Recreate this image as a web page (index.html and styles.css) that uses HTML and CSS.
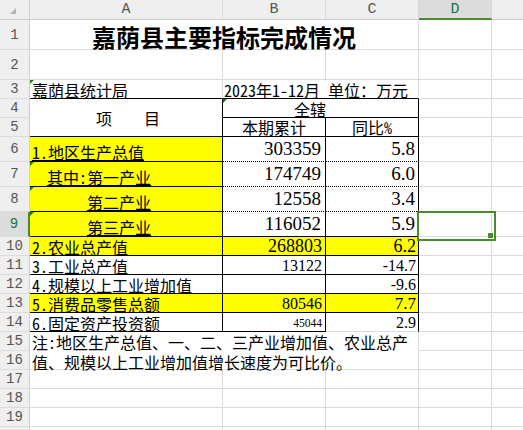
FILE: index.html
```html
<!DOCTYPE html>
<html lang="zh-CN">
<head>
<meta charset="utf-8">
<title>嘉荫县主要指标完成情况</title>
<link rel="stylesheet" href="styles.css">
</head>
<body>
<div class="sheet">
  <div class="corner"><svg width="6" height="6" viewBox="0 0 6 6"><polygon points="6,0 6,6 0,6" fill="#b4b4b4"/></svg></div>
  <div class="colh">A</div>
  <div class="colh">B</div>
  <div class="colh">C</div>
  <div class="colh colsel">D</div>
  <div class="colh e"></div>

  <div class="rowh">1</div>
  <div class="c s3 title">嘉荫县主要指标完成情况</div>
  <div class="c"></div>
  <div class="c e"></div>

  <div class="rowh">2</div>
  <div class="c"></div><div class="c"></div><div class="c"></div><div class="c"></div><div class="c e"></div>

  <div class="rowh">3</div>
  <div class="c bb tri txt">嘉荫县统计局</div>
  <div class="c s2 bb txt unit">2023年1-12月 单位：万元</div>
  <div class="c"></div>
  <div class="c e"></div>

  <div class="rowh">4</div>
  <div class="c r2 bb br mid">项&nbsp;&nbsp;&nbsp;&nbsp;目</div>
  <div class="c s2 bb br tri zone">全辖</div>
  <div class="c"></div>
  <div class="c e"></div>

  <div class="rowh">5</div>
  <div class="c bb br hd">本期累计</div>
  <div class="c bb br hd">同比%</div>
  <div class="c"></div>
  <div class="c e"></div>

  <div class="rowh">6</div>
  <div class="c y bb br big"><span class="u">1.地区生产总值</span></div>
  <div class="c db br nb">303359</div>
  <div class="c db br nc">5.8</div>
  <div class="c"></div>
  <div class="c e"></div>

  <div class="rowh">7</div>
  <div class="c y bb br big tri ind1"><span class="u">其中:第一产业</span></div>
  <div class="c db br nb">174749</div>
  <div class="c db br nc">6.0</div>
  <div class="c"></div>
  <div class="c e"></div>

  <div class="rowh">8</div>
  <div class="c y bb br big tri ind2"><span class="u">第二产业</span></div>
  <div class="c db br nb">12558</div>
  <div class="c db br nc">3.4</div>
  <div class="c"></div>
  <div class="c e"></div>

  <div class="rowh rowsel">9</div>
  <div class="c y bb br big tri ind2"><span class="u">第三产业</span></div>
  <div class="c bb br nb">116052</div>
  <div class="c bb br nc">5.9</div>
  <div class="c selcell"></div>
  <div class="c e"></div>

  <div class="rowh">10</div>
  <div class="c y bb br txt"><span class="u">2.农业总产值</span></div>
  <div class="c y bb br n18 pb">268803</div>
  <div class="c y bb br n18 pc">6.2</div>
  <div class="c"></div>
  <div class="c e"></div>

  <div class="rowh">11</div>
  <div class="c bb br txt">3.工业总产值</div>
  <div class="c bb br n16 pb">13122</div>
  <div class="c bb br n16 pc">-14.7</div>
  <div class="c"></div>
  <div class="c e"></div>

  <div class="rowh">12</div>
  <div class="c bb br txt">4.规模以上工业增加值</div>
  <div class="c bb br"></div>
  <div class="c bb br n16 pc">-9.6</div>
  <div class="c"></div>
  <div class="c e"></div>

  <div class="rowh">13</div>
  <div class="c y bb br txt"><span class="u">5.消费品零售总额</span></div>
  <div class="c y bb br n16 pb">80546</div>
  <div class="c y bb br n17 pc">7.7</div>
  <div class="c"></div>
  <div class="c e"></div>

  <div class="rowh">14</div>
  <div class="c bb br txt">6.固定资产投资额</div>
  <div class="c bb br n11 pb">45044</div>
  <div class="c br n16 pc">2.9</div>
  <div class="c"></div>
  <div class="c e"></div>

  <div class="rowh">15</div>
  <div class="c s3 r2 note">注:地区生产总值、一、二、三产业增加值、农业总产值、规模以上工业增加值增长速度为可比价。</div>
  <div class="c"></div>
  <div class="c e"></div>

  <div class="rowh">16</div>
  <div class="c"></div>
  <div class="c e"></div>

  <div class="rowh">17</div>
  <div class="c"></div><div class="c"></div><div class="c"></div><div class="c"></div><div class="c e"></div>
  <div class="rowh">18</div>
  <div class="c"></div><div class="c"></div><div class="c"></div><div class="c"></div><div class="c e"></div>
  <div class="rowh">19</div>
  <div class="c"></div><div class="c"></div><div class="c"></div><div class="c"></div><div class="c e"></div>
  <div class="rowh"></div>
  <div class="c"></div><div class="c"></div><div class="c"></div><div class="c"></div><div class="c e"></div>
</div>
</body>
</html>
```

FILE: styles.css
```css
* { box-sizing: border-box; }
html, body { margin: 0; padding: 0; background: #ffffff; }
body {
  width: 523px;
  height: 430px;
  overflow: hidden;
  font-family: "Noto Sans Mono CJK SC", "Noto Sans CJK SC", sans-serif;
  font-size: 16px;
  color: #000;
}
.sheet {
  width: 523px;
  height: 430px;
  overflow: hidden;
  display: grid;
  grid-template-columns: 30px 193px 103px 93px 73px 31px;
  grid-template-rows: 20px 30px 30px 19px 19px 19px 25px 25px 25px 25px repeat(10, 19px) 4px;
}

/* headers */
.corner, .colh, .rowh {
  background: #efefef;
  display: flex;
  align-items: center;
  justify-content: center;
  color: #555;
  font-family: "Liberation Mono", monospace;
}
.corner {
  border-right: 1px solid #cfcfcf;
  border-bottom: 1px solid #cfcfcf;
  padding: 2px 4px 0 0;
}
.corner svg { display: block; }
.colh {
  border-right: 1px solid #d8d8d8;
  border-bottom: 1px solid #cfcfcf;
  font-size: 15px;
}
.colsel {
  background: #dcdcdc;
  color: #217346;
  border-bottom: 2px solid #4a8b2c;
}
.rowh {
  border-right: 1px solid #cfcfcf;
  border-bottom: 1px solid #dcdcdc;
  font-size: 14px;
}
.rowsel {
  background: #dcdcdc;
  color: #217346;
  border-right: 2px solid #4a8b2c;
}

/* cells */
.c {
  border-right: 1px solid #dcdcdc;
  border-bottom: 1px solid #dcdcdc;
  display: flex;
  align-items: flex-end;
  min-width: 0;
  line-height: 16px;
  white-space: nowrap;
}
.e { border-right: none; }
.s2 { grid-column: span 2; }
.s3 { grid-column: span 3; }
.r2 { grid-row: span 2; }
.bb { border-bottom-color: #000; }
.br { border-right-color: #000; }
.db { border-bottom: 1px dotted #000; }
.y { background: #ffff00; }
.u { text-decoration: underline; text-underline-offset: 1px; }

.title {
  justify-content: center;
  font-size: 24px;
  line-height: 24px;
  font-weight: 700;
  padding-bottom: 0;
}
.txt { padding-left: 2px; padding-bottom: 0; }
.unit { padding-left: 1px; }
.mid { align-items: center; justify-content: center; padding-left: 4px; }
.zone { padding-left: 71px; padding-bottom: 0; }
.hd { justify-content: center; padding-bottom: 1px; }
.big { padding-left: 2px; padding-bottom: 1px; }
.ind1 { padding-left: 17px; }
.ind2 { padding-left: 57px; }

.tri { position: relative; }
.tri::before {
  content: "";
  position: absolute;
  top: 0;
  left: 0;
  border-style: solid;
  border-width: 4px 4px 0 0;
  border-color: #1f7d1f transparent transparent transparent;
}

/* numbers */
.nb, .nc, .n18, .n17, .n16, .n11 {
  font-family: "Liberation Serif", serif;
  justify-content: flex-end;
}
.nb, .nc { font-size: 19px; line-height: 19px; padding-bottom: 3px; }
.nb { padding-right: 4px; }
.nc { padding-right: 3px; }
.n18 { font-size: 18px; line-height: 16px; padding-bottom: 1px; }
.n17 { font-size: 17px; line-height: 15px; padding-bottom: 1px; }
.n16 { font-size: 16px; line-height: 15px; padding-bottom: 1px; }
.n11 { font-size: 11.5px; line-height: 12px; padding-bottom: 2px; }
.pb { padding-right: 3px; }
.pc { padding-right: 2px; }

.note {
  white-space: normal;
  align-items: flex-start;
  line-height: 20px;
  padding-left: 2px;
  padding-right: 0;
}

/* selected cell D9 */
.selcell { position: relative; }
.selcell::after {
  content: "";
  position: absolute;
  left: -2px;
  top: -1px;
  width: 75px;
  height: 26px;
  border: 2px solid #4a8b2c;
  z-index: 5;
}
.selcell::before {
  content: "";
  position: absolute;
  left: 69px;
  top: 21px;
  width: 5px;
  height: 5px;
  background: #4a8b2c;
  z-index: 6;
}
```
